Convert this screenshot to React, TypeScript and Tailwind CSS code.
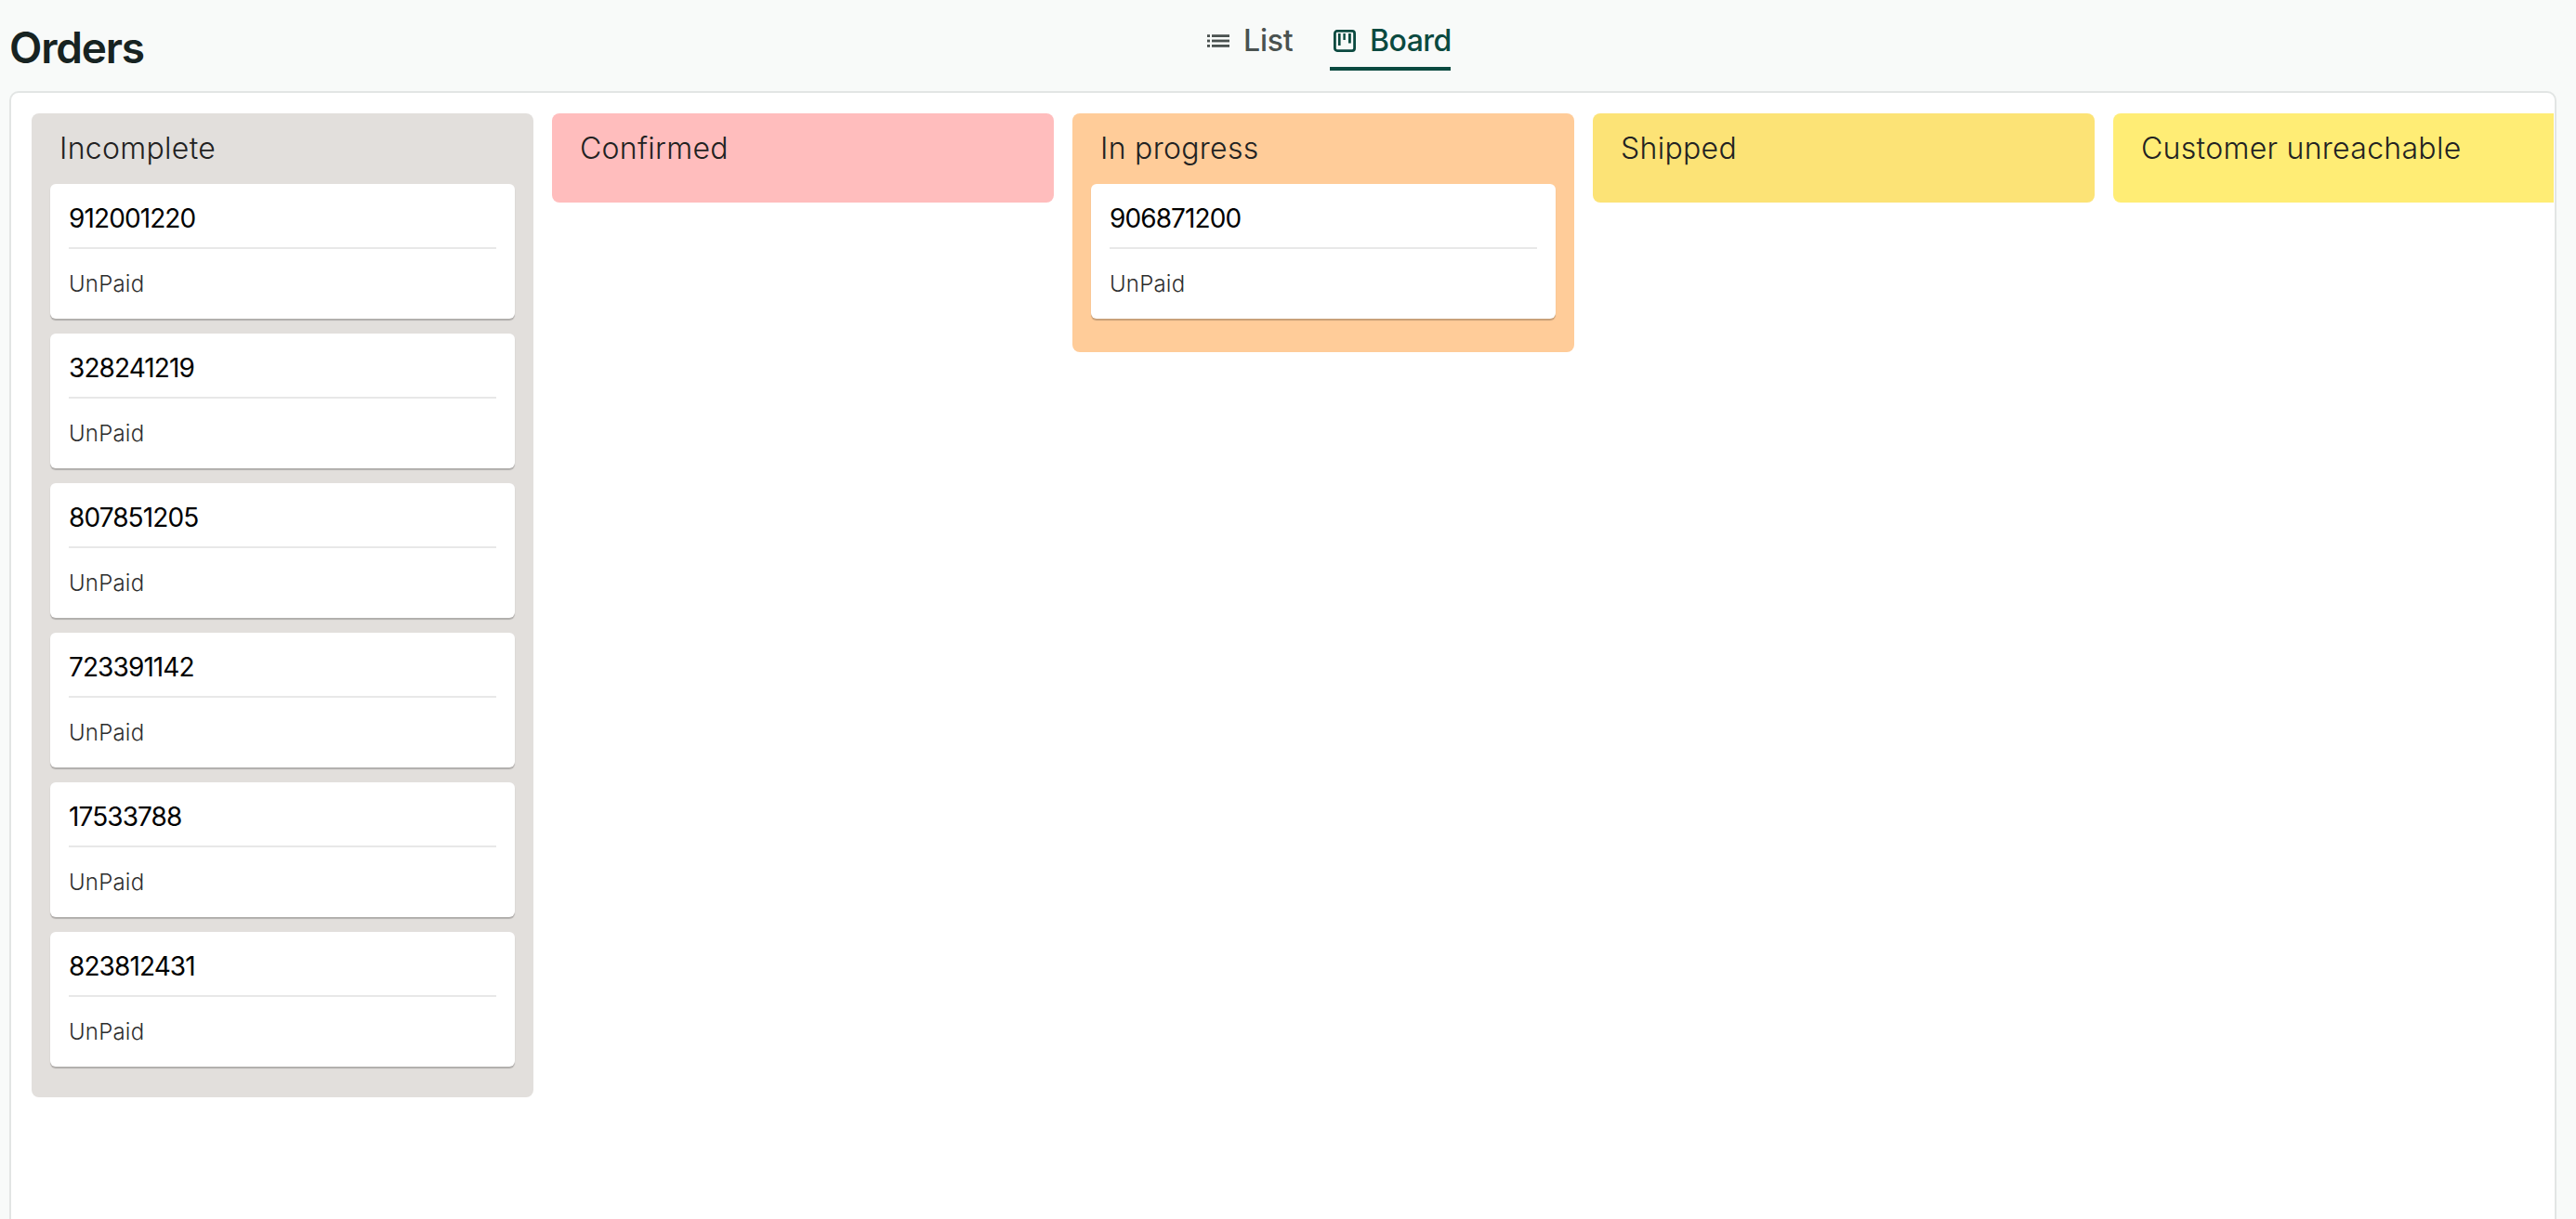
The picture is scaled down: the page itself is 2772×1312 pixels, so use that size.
const font = { fontFamily: '"Inter", sans-serif' };
const cols = [
  { name: 'Incomplete', bg: 'bg-[#e2dfdc]', pb: 'pb-[33px]', cards: ['912001220', '328241219', '807851205', '723391142', '17533788', '823812431'] },
  { name: 'Confirmed', bg: 'bg-[#ffbdbd]', pb: 'pb-[20px]', cards: [] },
  { name: 'In progress', bg: 'bg-[#ffcc99]', pb: 'pb-[36px]', cards: ['906871200'] },
  { name: 'Shipped', bg: 'bg-[#fce376]', pb: 'pb-[20px]', cards: [] },
  { name: 'Customer unreachable', bg: 'bg-[#ffed75]', pb: 'pb-[20px]', cards: [] },
];

function ListIcon() {
  return (
    <svg width="24" height="14" viewBox="0 0 24 14" className="text-[#4a5250]">
      <g fill="currentColor">
        <rect x="0" y="0.2" width="3" height="2.8" />
        <rect x="0" y="5.6" width="3" height="2.8" />
        <rect x="0" y="11" width="3" height="2.8" />
        <rect x="5" y="0.2" width="19" height="2.8" />
        <rect x="5" y="5.6" width="19" height="2.8" />
        <rect x="5" y="11" width="19" height="2.8" />
      </g>
    </svg>
  );
}

function BoardIcon() {
  return (
    <svg width="24" height="24" viewBox="0 0 24 24" className="text-[#0b4a40]">
      <rect x="1.4" y="1.4" width="21.2" height="21.2" rx="2.5" fill="none" stroke="currentColor" strokeWidth="2.8" />
      <g fill="currentColor">
        <rect x="5" y="4" width="2.6" height="13" />
        <rect x="10.4" y="4" width="2.4" height="7" />
        <rect x="16" y="4" width="2.8" height="10.5" />
      </g>
    </svg>
  );
}

export default function App() {
  return (
    <div className="h-[1312px] overflow-hidden bg-[#f8faf9]" style={font}>
      <header className="flex h-[98px] items-start pl-[10px]">
        <h1 className="mt-[22px] w-[1289px] text-[46px] font-semibold leading-[58px] tracking-[-1.2px] text-[#172322]">Orders</h1>
        <nav className="flex text-[32px] font-medium leading-[44px] tracking-[-0.2px]">
          <div className="mt-[22px] flex h-[54px] w-[132px] items-start">
            <div className="flex h-[44px] items-center gap-[15px] text-[#4a5250]">
              <ListIcon />
              <span>List</span>
            </div>
          </div>
          <div className="mt-[22px] flex h-[54px] w-[130px] items-start border-b-4 border-[#0b4a40] pl-[4px]">
            <div className="flex h-[44px] items-center gap-[15px] tracking-[-0.5px] text-[#0b4a40]">
              <BoardIcon />
              <span>Board</span>
            </div>
          </div>
        </nav>
      </header>
      <main className="ml-[10px] mr-[21px] h-[1300px] overflow-hidden rounded-t-[10px] border-2 border-[#e2e5e4] bg-white py-[22px] pl-[22px] pr-[1px]">
        <div className="flex items-start gap-[20px] overflow-hidden">
          {cols.map((c) => (
            <section key={c.name} className={`w-[540px] shrink-0 rounded-[8px] px-[20px] ${c.pb} ${c.bg}`}>
              <h2 className="flex h-[76px] items-center pb-[1px] pl-[10px] text-[32px] font-light leading-[44px] tracking-[0.3px] text-[#222222]">{c.name}</h2>
              {c.cards.length > 0 && (
                <div className="flex flex-col gap-[16px]">
                  {c.cards.map((id) => (
                    <article key={id} className="h-[145px] rounded-[6px] bg-white px-[20px] shadow-[0_2px_1px_rgba(0,0,0,0.22)]">
                      <div className="flex h-[70px] items-center border-b-2 border-[#e8e8e8] pt-[6px] text-[28px] font-normal tracking-[-0.9px] text-black">{id}</div>
                      <div className="flex h-[71px] items-center pt-[5px] text-[24px] font-light tracking-[0.2px] text-[#2e2e2e]">UnPaid</div>
                    </article>
                  ))}
                </div>
              )}
            </section>
          ))}
        </div>
      </main>
    </div>
  );
}
